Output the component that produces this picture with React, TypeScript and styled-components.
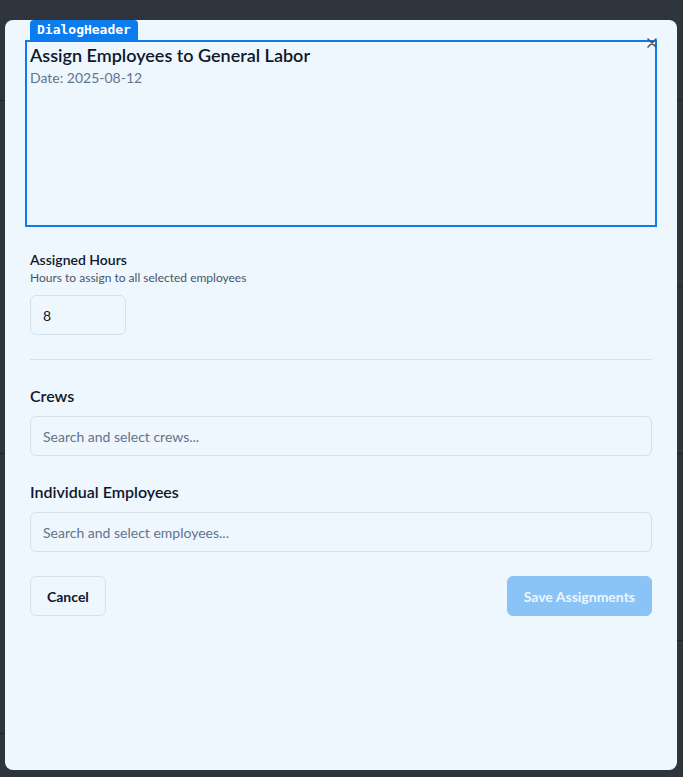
import React from "react";
import styled, { createGlobalStyle } from "styled-components";

const Global = createGlobalStyle`
  html, body { margin: 0; padding: 0; }
  body {
    background: #2f353d;
    font-family: "Lato", "Noto Sans", sans-serif;
    width: 683px;
    height: 777px;
    overflow: hidden;
  }
  * { box-sizing: border-box; }
`;

const Backdrop = styled.div`
  position: relative;
  width: 683px;
  height: 777px;
  padding: 20px 6px 7px 5px;
  display: flex;
`;

const BgLine = styled.div<{ $top: number; $right?: boolean }>`
  position: absolute;
  top: ${(p) => p.$top}px;
  ${(p) => (p.$right ? "right: 0;" : "left: 0;")}
  width: 6px;
  height: 1px;
  background: #1f242a;
`;

const Dialog = styled.div`
  position: relative;
  flex: 1;
  background: #eef6fe;
  border-radius: 8px;
  padding: 25px 25px;
  display: flex;
  flex-direction: column;
`;

const HeaderTag = styled.div`
  position: absolute;
  top: 0;
  left: 25px;
  height: 20px;
  padding: 0 7px;
  background: #0a7cf0;
  color: #fff;
  font-family: "DejaVu Sans Mono", "Liberation Mono", monospace;
  font-size: 13px;
  font-weight: 600;
  line-height: 20px;
  border-radius: 4px 4px 0 0;
`;

const Header = styled.div`
  height: 177px;
  outline: 2px solid #0a7cf0;
  outline-offset: 3px;
  display: flex;
  flex-direction: column;
  gap: 3px;
`;

const Title = styled.h2`
  margin: 0;
  font-size: 18px;
  font-weight: 600;
  color: #0f172a;
  line-height: 20px;
`;

const DateText = styled.p`
  margin: 0;
  font-size: 14px;
  color: #64748b;
  line-height: 20px;
`;

const Close = styled.button`
  position: absolute;
  top: 17px;
  right: 19px;
  border: none;
  background: none;
  padding: 0;
  width: 12px;
  height: 12px;
  display: flex;
  align-items: center;
  justify-content: center;
  color: #475569;
`;

const Section = styled.div`
  margin-top: 28px;
  display: flex;
  flex-direction: column;
`;

const Label = styled.div<{ $big?: boolean }>`
  font-size: ${(p) => (p.$big ? 16 : 14)}px;
  font-weight: 600;
  color: #0f172a;
  line-height: 20px;
`;

const Hint = styled.div`
  font-size: 12px;
  color: #475569;
  line-height: 16px;
`;

const Input = styled.div<{ $w?: number; $placeholder?: boolean }>`
  margin-top: ${(p) => (p.$placeholder ? 10 : 9)}px;
  width: ${(p) => (p.$w ? `${p.$w}px` : "100%")};
  height: 40px;
  border: 1px solid #d3e1ef;
  border-radius: 6px;
  padding: 0 12px;
  display: flex;
  align-items: center;
  font-size: 14px;
  color: ${(p) => (p.$placeholder ? "#64748b" : "#0f172a")};
`;

const Separator = styled.div`
  height: 1px;
  background: #d7e1ea;
  margin-top: 24px;
`;

const Group = styled.div<{ $mt: number }>`
  margin-top: ${(p) => p.$mt}px;
  display: flex;
  flex-direction: column;
`;

const Footer = styled.div`
  margin-top: 24px;
  display: flex;
  justify-content: space-between;
`;

const Button = styled.button<{ $primary?: boolean }>`
  height: 40px;
  padding: 0 16px;
  border-radius: 6px;
  font-family: inherit;
  font-size: 14px;
  font-weight: 700;
  border: 1px solid ${(p) => (p.$primary ? "#8ac3f5" : "#d3e1ef")};
  background: ${(p) => (p.$primary ? "#8ac3f5" : "transparent")};
  color: ${(p) => (p.$primary ? "#eef6fe" : "#0f172a")};
`;

export default function App() {
  return (
    <>
      <Global />
      <Backdrop>
        <BgLine $top={100} />
        <BgLine $top={453} />
        <BgLine $top={733} />
        <BgLine $top={100} $right />
        <BgLine $top={286} $right />
        <BgLine $top={453} $right />
        <BgLine $top={640} $right />
        <Dialog>
          <HeaderTag>DialogHeader</HeaderTag>
          <Close aria-label="Close">
            <svg width="10" height="10" viewBox="0 0 10 10">
              <path d="M1 1L9 9M9 1L1 9" stroke="currentColor" strokeWidth="1.6" strokeLinecap="round" />
            </svg>
          </Close>
          <Header>
            <Title>Assign Employees to General Labor</Title>
            <DateText>Date: 2025-08-12</DateText>
          </Header>
          <Section>
            <Label>Assigned Hours</Label>
            <Hint>Hours to assign to all selected employees</Hint>
            <Input $w={96}>8</Input>
          </Section>
          <Separator />
          <Group $mt={26}>
            <Label $big>Crews</Label>
            <Input $placeholder>Search and select crews...</Input>
          </Group>
          <Group $mt={26}>
            <Label $big>Individual Employees</Label>
            <Input $placeholder>Search and select employees...</Input>
          </Group>
          <Footer>
            <Button>Cancel</Button>
            <Button $primary>Save Assignments</Button>
          </Footer>
        </Dialog>
      </Backdrop>
    </>
  );
}
